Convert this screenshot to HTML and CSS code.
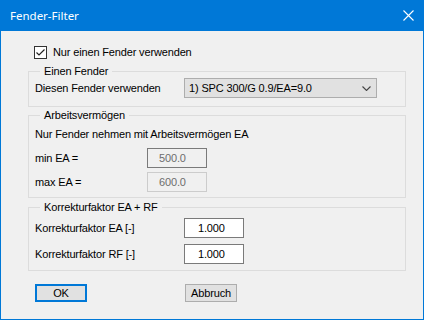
FILE: index.html
```html
<!DOCTYPE html>
<html lang="de">
<head>
    <meta charset="UTF-8">
    <title>Fender-Filter</title>
    <link rel="stylesheet" href="styles.css">
</head>
<body>
    <div class="window">
        <div class="titlebar">
            <span class="title">Fender-Filter</span>
            <svg class="close" width="11" height="11" viewBox="0 0 11 11">
                <path d="M0.5 0.5 L10.5 10.5 M10.5 0.5 L0.5 10.5" stroke="#fff" stroke-width="1.1" fill="none"/>
            </svg>
        </div>

        <div class="content">
            <label class="check-row">
                <span class="checkbox">
                    <svg width="11" height="11" viewBox="0 0 11 11">
                        <path d="M1.5 5.5 L4 8 L9.5 2.5" stroke="#222" stroke-width="1.2" fill="none"/>
                    </svg>
                </span>
                Nur einen Fender verwenden
            </label>

            <fieldset class="group group-fender">
                <legend>Einen Fender</legend>
                <div class="row">
                    <span class="label label-wide">Diesen Fender verwenden</span>
                    <div class="select">
                        <span>1) SPC 300/G 0.9/EA=9.0</span>
                        <svg width="9" height="5" viewBox="0 0 9 5">
                            <path d="M0.5 0.5 L4.5 4.5 L8.5 0.5" stroke="#444" stroke-width="1.1" fill="none"/>
                        </svg>
                    </div>
                </div>
            </fieldset>

            <fieldset class="group group-ea">
                <legend>Arbeitsvermögen</legend>
                <p class="hint">Nur Fender nehmen mit Arbeitsvermögen EA</p>
                <div class="row row-ea">
                    <span class="label label-narrow">min EA =</span>
                    <div class="field field-disabled">500.0</div>
                </div>
                <div class="row row-ea">
                    <span class="label label-narrow">max EA =</span>
                    <div class="field field-disabled field-light">600.0</div>
                </div>
            </fieldset>

            <fieldset class="group group-factor">
                <legend>Korrekturfaktor EA + RF</legend>
                <div class="row row-factor">
                    <span class="label label-wide">Korrekturfaktor EA [-]</span>
                    <div class="field">1.000</div>
                </div>
                <div class="row row-factor">
                    <span class="label label-wide">Korrekturfaktor RF [-]</span>
                    <div class="field">1.000</div>
                </div>
            </fieldset>

            <div class="buttons">
                <button class="btn btn-default">OK</button>
                <button class="btn">Abbruch</button>
            </div>
        </div>
    </div>
</body>
</html>
```

FILE: styles.css
```css
body {
    margin: 0;
    font-family: "Liberation Sans", Arial, sans-serif;
    font-size: 11px;
    letter-spacing: -0.15px;
    color: #000;
}

.window {
    width: 424px;
    height: 320px;
    box-sizing: border-box;
    border: 1px solid #0078d7;
    border-top: none;
    background-color: #f0f0f0;
    display: flex;
    flex-direction: column;
}

.titlebar {
    height: 31px;
    margin: 0 -1px;
    background-color: #0078d7;
    color: #fff;
    display: flex;
    align-items: center;
    justify-content: space-between;
    padding: 0 10px 0 10px;
}

.title {
    font-family: "Noto Sans", sans-serif;
    font-size: 11.5px;
    letter-spacing: 0;
    margin-top: -1px;
}

.content {
    padding: 15px 17px 0 27px;
}

.check-row {
    display: flex;
    align-items: center;
    height: 13px;
    line-height: 13px;
    margin-left: 6px;
}

.checkbox {
    width: 11px;
    height: 11px;
    border: 1px solid #333;
    background-color: #fff;
    margin-right: 6px;
    display: flex;
}

.group {
    margin: 0;
    border: 1px solid #dcdcdc;
    padding: 0 6px;
    min-width: 0;
}

.group legend {
    padding: 0 4px;
    margin-left: 5px;
    line-height: 14px;
}

.group-fender {
    margin-top: 5px;
    padding-bottom: 8px;
}

.group-ea {
    margin-top: 1px;
    padding-bottom: 5px;
}

.group-factor {
    margin-top: 2px;
    padding-top: 4px;
    padding-bottom: 6px;
}

.row {
    display: flex;
    align-items: center;
}

.label-wide {
    width: 149px;
}

.label-narrow {
    width: 112px;
}

.select {
    width: 193px;
    height: 20px;
    box-sizing: border-box;
    border: 1px solid #adadad;
    background-color: #e1e1e1;
    display: flex;
    align-items: center;
    justify-content: space-between;
    padding: 0 5px 0 4px;
}

.hint {
    margin: 5px 0 0 0;
    line-height: 14px;
}

.row-ea {
    margin-top: 4px;
}

.row-ea:first-of-type {
    margin-top: 7px;
}

.row-factor + .row-factor {
    margin-top: 6px;
}

.field {
    width: 60px;
    height: 20px;
    box-sizing: border-box;
    border: 1px solid #7a7a7a;
    background-color: #fff;
    line-height: 18px;
    padding-left: 13px;
}

.field-disabled {
    background-color: #f0f0f0;
    color: #6d6d6d;
    padding-left: 11px;
}

.field-light {
    border-color: #cccccc;
}

.buttons {
    display: flex;
    gap: 98px;
    margin: 13px 0 0 7px;
}

.btn {
    width: 52px;
    height: 18px;
    box-sizing: border-box;
    border: 1px solid #adadad;
    background-color: #e1e1e1;
    font-family: "Liberation Sans", Arial, sans-serif;
    font-size: 11px;
    letter-spacing: -0.15px;
    color: #000;
    padding: 0;
}

.btn-default {
    border: 2px solid #0078d7;
}
```
